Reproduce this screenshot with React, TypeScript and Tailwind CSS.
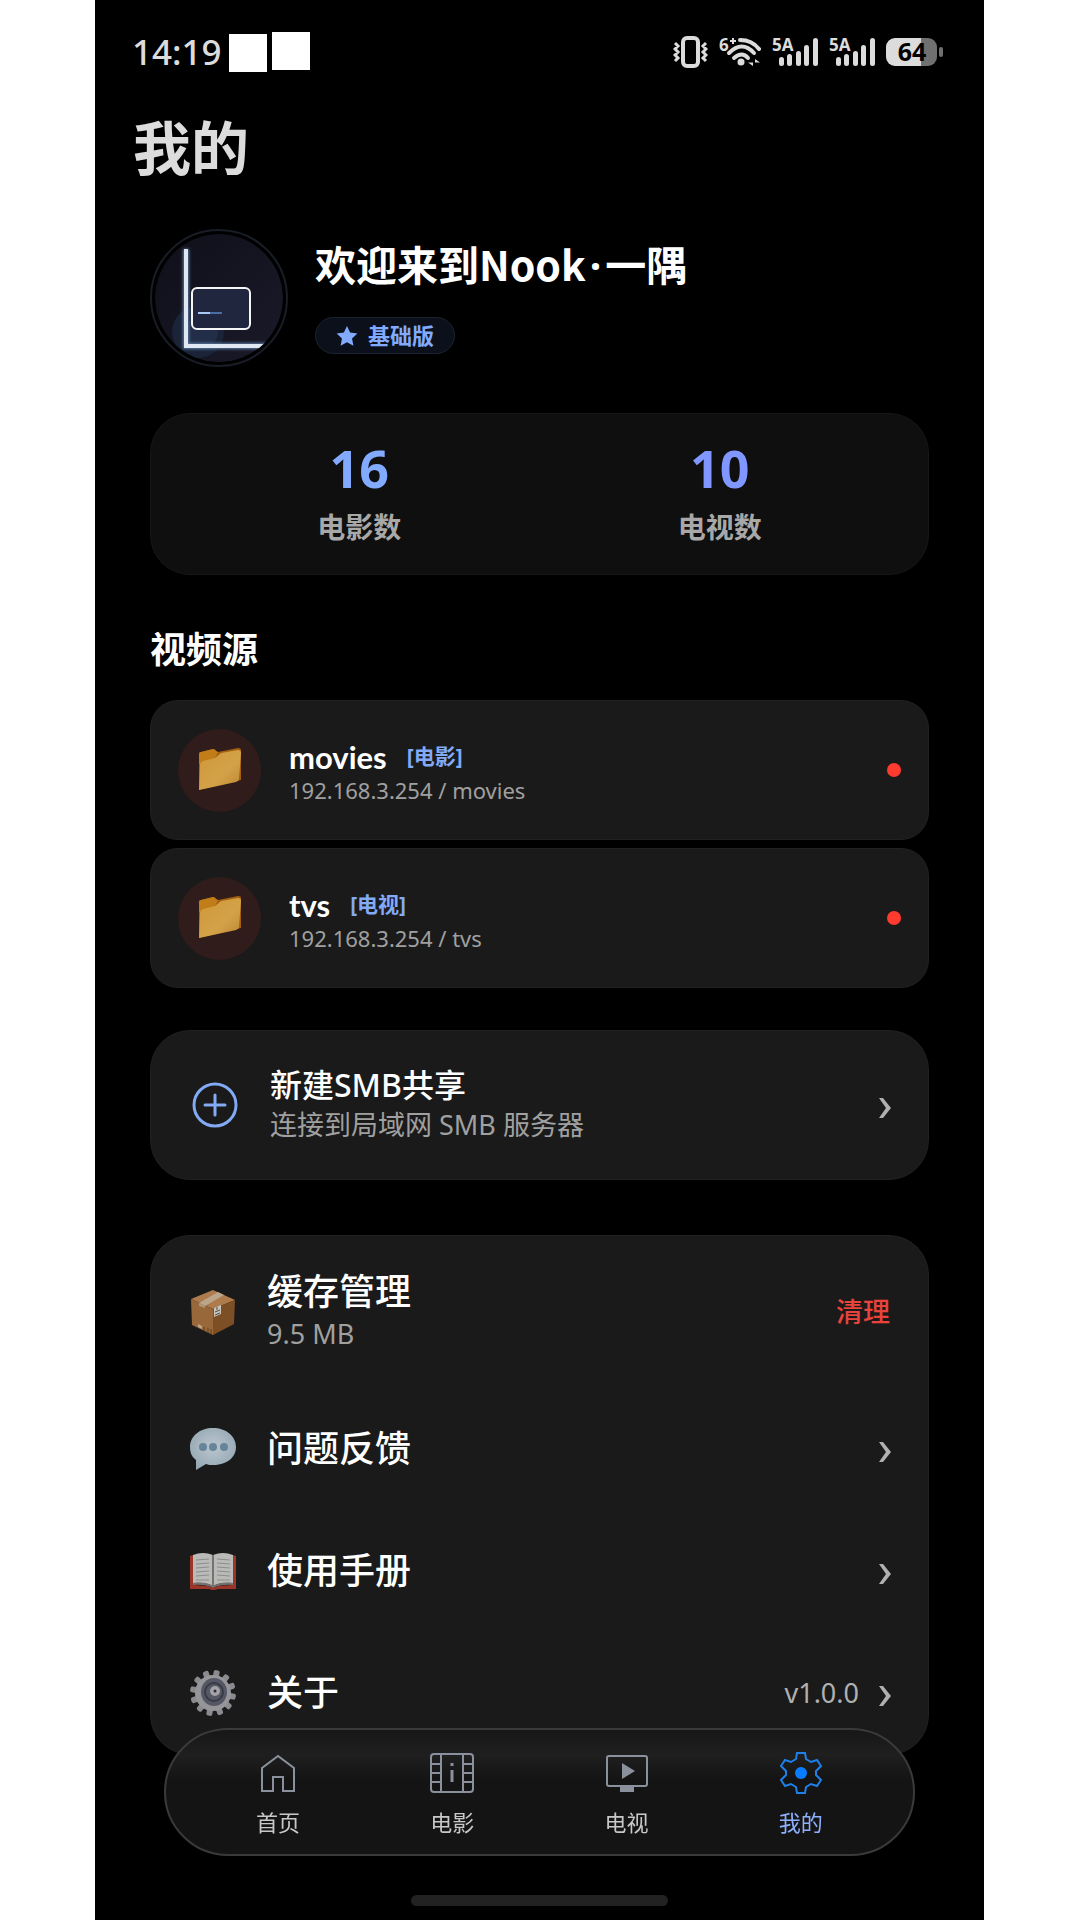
import { useState } from "react";
import type { ReactNode } from "react";

type Source = { name: string; tag: string; path: string };

const stats = [
  { label: "电影数", value: 16, color: "text-[#82aaff]" },
  { label: "电视数", value: 10, color: "text-[#8097ff]" },
];

const sources: Source[] = [
  { name: "movies", tag: "[电影]", path: "192.168.3.254 / movies" },
  { name: "tvs", tag: "[电视]", path: "192.168.3.254 / tvs" },
];

const SignalIcon = () => (
  <svg width="46" height="44" viewBox="0 -7 46 44" fill="#dcdcdc">
    <text x="0" y="14" fontSize="17" fontWeight="700">
      5A
    </text>
    <rect x="7" y="20" width="5" height="9" rx="2.5" />
    <rect x="15" y="17" width="5" height="12" rx="2.5" />
    <rect x="24" y="14" width="5" height="15" rx="2.5" />
    <rect x="32" y="8" width="5" height="21" rx="2.5" />
    <rect x="41" y="1" width="5" height="28" rx="2.5" />
  </svg>
);

const StatusBar = () => (
  <div className="flex h-[104px] items-center justify-between pr-[40px] pl-[37px]">
    <div className="flex items-center gap-[5px]">
      <span className="w-[92px] pb-[2px] text-[35px] leading-none font-medium text-[#dcdcdc]">
        14:19
      </span>
      <span className="mt-[2px] size-[38px] bg-white" />
      <span className="mb-[2px] size-[38px] bg-white" />
    </div>
    <div className="flex items-center gap-[11px]">
      <svg width="35" height="32" viewBox="0 0 35 32" fill="none" stroke="#dcdcdc">
        <rect x="10" y="2" width="15" height="28" rx="4" strokeWidth="4" />
        <path
          d="M2 7l3 3-3 3 3 3-3 3 3 3-3 3M33 7l-3 3 3 3-3 3 3 3-3 3 3 3"
          strokeWidth="3"
        />
      </svg>
      <svg width="42" height="44" viewBox="0 -7 42 44" fill="none" stroke="#dcdcdc">
        <text x="0" y="14" fontSize="17" fontWeight="700" fill="#dcdcdc" stroke="none">
          6
        </text>
        <path d="M14 1v6M11 4h6" strokeWidth="2" />
        <path d="M21 3q12 0 19 9" strokeWidth="4" strokeLinecap="round" />
        <path d="M10 16q13-13 25 0M15 21q8-7 14 0" strokeWidth="4" strokeLinecap="round" />
        <circle cx="22" cy="25" r="3.5" fill="#dcdcdc" stroke="none" />
        <path d="M34 22v7l-5-3.500h5M36 29v-7l5 3.500h-5" fill="#dcdcdc" stroke="none" />
      </svg>
      <SignalIcon />
      <SignalIcon />
      <svg width="58" height="44" viewBox="0 -8 58 44">
        <path d="M9 0h26v28H9a9 9 0 0 1-9-9V9a9 9 0 0 1 9-9z" fill="#dcdcdc" />
        <path d="M35 0h7a9 9 0 0 1 9 9v10a9 9 0 0 1-9 9h-7z" fill="#707070" />
        <rect x="53" y="9" width="4" height="10" rx="2" fill="#707070" />
        <text x="26" y="23" fontSize="25" fontWeight="700" textAnchor="middle" fill="#000">
          64
        </text>
      </svg>
    </div>
  </div>
);

const Avatar = () => (
  <svg width="138" height="138" viewBox="0 0 138 138" fill="none" className="shrink-0">
    <defs>
      <clipPath id="avatar-clip">
        <circle cx="69" cy="69" r="64" />
      </clipPath>
      <filter id="avatar-glow" x="-20%" y="-20%" width="140%" height="140%">
        <feGaussianBlur stdDeviation="1.5" />
      </filter>
      <linearGradient id="avatar-bg" x1="0" y1="0" x2="1" y2="1">
        <stop offset="0" stopColor="#0f101a" />
        <stop offset="1" stopColor="#1b1929" />
      </linearGradient>
    </defs>
    <circle cx="69" cy="69" r="68" stroke="#191d26" strokeWidth="2" />
    <g clipPath="url(#avatar-clip)">
      <circle cx="69" cy="69" r="64" fill="url(#avatar-bg)" />
      <circle cx="48" cy="103" r="26" fill="#1a2338" />
      <circle cx="52" cy="103" r="16" fill="#222d48" />
      <path d="M36 20v97h96" stroke="#5d7da3" strokeWidth="6" filter="url(#avatar-glow)" />
      <path d="M36 20v97h96" stroke="#e0e8f3" strokeWidth="4" />
      <rect x="42" y="59" width="58" height="41" rx="5" fill="#20263e" stroke="#f5f5f5" strokeWidth="2" />
      <path d="M48 84h12" stroke="#a9c8f5" strokeWidth="2" />
      <path d="M60 84h12" stroke="#4a6da3" strokeWidth="2" />
    </g>
  </svg>
);

const FolderIcon = () => (
  <svg width="44" height="44" viewBox="0 0 44 44">
    <defs>
      <linearGradient id="folder-front" x1="0" y1="0" x2="1" y2="1">
        <stop offset="0" stopColor="#d0973a" />
        <stop offset="0.6" stopColor="#d3a248" />
        <stop offset="1" stopColor="#bd8532" />
      </linearGradient>
    </defs>
    <path d="M1 6q0-2 2-2l12-3q2 0 3 2l2 1 20-4q3 0 3 2v30L1 42z" fill="#a0600f" />
    <path d="M1 6q0-2 2-2l12-3q2 0 3 2l2 1-4 8L1 16z" fill="#c07d18" />
    <path d="M2 17q0-3 3-4l12-3 6-5 17-3q3 0 3 3l-2 26q0 2-3 3L1 42z" fill="url(#folder-front)" />
  </svg>
);

const BoxIcon = () => (
  <svg width="46" height="46" viewBox="0 0 46 46">
    <path d="M1 10L23 1l22 10-22 9z" fill="#ad7b4c" />
    <path d="M1 10l22 10v26L2 36z" fill="#99683a" />
    <path d="M45 11L23 20v26l21-11z" fill="#7c4f25" />
    <path d="M9 14L28 3l6 3-19 11z" fill="#bba58b" />
    <path d="M9 14l6 3v2l-6-2z" fill="#ad957a" />
    <path d="M24 19l7-3v9l-7 3z" fill="#c9c5bd" />
    <path d="M25 23l5-2M25 26l5-2M27 18v3" stroke="#55483b" />
    <path d="M8 35l4 2v3l-4-2z" fill="#bba58b" />
    <path d="M14 38v4M18 39v5M21 40v5" stroke="#5e3b1c" strokeWidth="1" />
  </svg>
);

const ChatIcon = () => (
  <svg width="46" height="44" viewBox="0 0 46 44">
    <defs>
      <radialGradient id="bubble" cx="0.5" cy="0.45" r="0.6">
        <stop offset="0" stopColor="#bcc6cd" />
        <stop offset="1" stopColor="#93a7b4" />
      </radialGradient>
    </defs>
    <path
      d="M23 1C10 1 0 9 0 20c0 6 2 10 6 13v10l10-6c2 1 5 1 7 1 13 0 23-7 23-18S36 1 23 1z"
      fill="url(#bubble)"
    />
    <g fill="#66849a">
      <circle cx="13" cy="20" r="4" />
      <circle cx="23" cy="20" r="4" />
      <circle cx="34" cy="20" r="4" />
    </g>
  </svg>
);

const BookIcon = () => (
  <svg width="48" height="38" viewBox="0 0 48 38">
    <path d="M1 4l3-1 1 30 14 1q5 3 10 0l14-1 1-30 3 1v33H29q-5 2-9 0H1z" fill="#9a3527" />
    <path d="M4 3q10-4 20 0 10-4 20 0v28q-12-1-20 3-8-4-20-3z" fill="#babab8" />
    <path d="M4 31q13-2 20 3 7-5 20-3v2q-12-1-20 3-8-4-20-3z" fill="#76716d" />
    <path d="M24 3v31" stroke="#77736f" strokeWidth="2" />
    <path
      d="M7 8l13-1M7 12l13-1M7 16l13-1M7 20l13-1M7 24l13-1M7 28l13 0M28 7l13 1M28 11l13 1M28 15l13 1M28 19l13 1M28 23l13 1M28 28l13 0"
      stroke="#8c8c8a"
      strokeWidth="1"
    />
  </svg>
);

const teeth = [0, 30, 60, 90, 120, 150, 180, 210, 240, 270, 300, 330];

const CogIcon = () => (
  <svg width="46" height="46" viewBox="0 0 46 46">
    <g fill="#8b8b8f">
      {teeth.map((angle) => (
        <rect key={angle} x="20" y="0" width="6" height="9" rx="2" transform={`rotate(${angle + 10} 23 23)`} />
      ))}
    </g>
    <circle cx="23" cy="23" r="18" fill="#96969a" />
    <ellipse cx="24" cy="22" rx="13" ry="14" fill="#555864" />
    <circle cx="24" cy="22" r="9" fill="none" stroke="#383b46" strokeWidth="2" />
    <circle cx="25" cy="21" r="5" fill="#a3a3a7" />
    <circle cx="25" cy="21" r="1.5" fill="#2c2c32" />
  </svg>
);

const Chevron = () => (
  <svg width="13" height="20" viewBox="0 0 13 20" fill="#b0b0b0" className="mt-[6px]">
    <path d="M1 0h4l8 10-8 10H1l7-10z" />
  </svg>
);

const SourceCard = ({ source }: { source: Source }) => (
  <button className="flex h-[140px] w-full items-center rounded-[28px] border border-[#212121] bg-[#1a1a1a] px-[27px] text-left">
    <span className="flex size-[83px] shrink-0 items-center justify-center rounded-full bg-[#301c1b]">
      <FolderIcon />
    </span>
    <span className="ml-[28px] flex flex-1 flex-col pt-[6px]">
      <span className="flex items-center gap-[20px] leading-8">
        <span className="font-[Lato,'Noto_Sans_CJK_SC',sans-serif] text-[31px] font-bold text-white">
          {source.name}
        </span>
        <span className="pb-[2px] text-[21px] font-bold text-[#82aaf5]">{source.tag}</span>
      </span>
      <span className="text-[22px] leading-8 text-[#a0a0a0]">{source.path}</span>
    </span>
    <span className="size-[14px] rounded-full bg-[#ff3b30]" />
  </button>
);

const SettingRow = ({
  icon,
  title,
  detail,
}: {
  icon: ReactNode;
  title: string;
  detail?: string;
}) => (
  <button className="flex h-[122px] w-full items-center pr-[37px] pl-[38px] text-left">
    <span className="flex w-[48px] justify-center">{icon}</span>
    <span className="ml-[30px] flex-1 text-[36px] leading-none font-medium text-white">
      {title}
    </span>
    {detail && <span className="mr-[19px] text-[27px] text-[#b0b0b0]">{detail}</span>}
    <Chevron />
  </button>
);

const HomeIcon = () => (
  <svg width="44" height="44" viewBox="0 0 44 44" fill="none" stroke="#8b919c" strokeWidth="2">
    <path d="M6 40V17L22 5l16 12v23H27V26H17v14z" />
  </svg>
);

const FilmIcon = () => (
  <svg width="44" height="44" viewBox="0 0 44 44" fill="none" stroke="#8b919c" strokeWidth="2">
    <rect x="1" y="3" width="42" height="38" rx="3" />
    <path d="M11 3v38M33 3v38M1 13h10M1 22h10M1 31h10M33 13h10M33 22h10M33 31h10" />
    <path d="M22 12v3M22 19v12" strokeWidth="3" />
  </svg>
);

const TvIcon = () => (
  <svg width="44" height="44" viewBox="0 0 44 44" fill="none" stroke="#8b919c" strokeWidth="2">
    <rect x="2" y="5" width="40" height="30" rx="2" />
    <path d="M17 12v16l13-8z" fill="#8b919c" stroke="none" />
    <path d="M15 36h14v5H15z" fill="#8b919c" stroke="none" />
  </svg>
);

const GearIcon = () => (
  <svg width="44" height="44" viewBox="0 0 44 44" fill="none" stroke="#1e80e8" strokeWidth="2">
    <path d="M18 2h8l1 6 5 3 6-2 4 6-5 5v4l5 5-4 6-6-2-5 3-1 6h-8l-1-6-5-3-6 2-4-6 5-5v-4l-5-5 4-6 6 2 5-3z" />
    <circle cx="22" cy="22" r="6" fill="#0a7cff" stroke="none" />
  </svg>
);

const tabs = [
  { label: "首页", icon: <HomeIcon /> },
  { label: "电影", icon: <FilmIcon /> },
  { label: "电视", icon: <TvIcon /> },
  { label: "我的", icon: <GearIcon /> },
];

const TabBar = () => {
  const [active, setActive] = useState("我的");

  return (
    <div className="fixed inset-x-0 bottom-0 flex flex-col items-center gap-[39px] pr-[165px] pb-[14px] pl-[164px]">
      <nav className="grid h-[128px] w-full grid-cols-4 rounded-full border-2 border-[#3a3a3a] bg-linear-to-b from-[#171717] via-[#1f1f1f] via-20% to-[#141414] to-40% px-[25px]">
        {tabs.map((tab) => (
          <button
            key={tab.label}
            onClick={() => setActive(tab.label)}
            className="flex flex-col items-center justify-center gap-[11px] pt-1">
            {tab.icon}
            <span
              className={`text-[22px] leading-8 ${
                active === tab.label ? "text-[#8fb0ff]" : "text-[#c8c8c8]"
              }`}>
              {tab.label}
            </span>
          </button>
        ))}
      </nav>
      <div className="h-[11px] w-[257px] rounded-full bg-[#222222]" />
    </div>
  );
};

const App = () => {
  return (
    <div className="min-h-screen bg-white pr-[96px] pl-[95px] font-['Noto_Sans','Noto_Sans_CJK_SC',sans-serif]">
      <div className="min-h-screen bg-black pb-[166px]">
        <StatusBar />
        <h1 className="flex h-[88px] items-center px-[38px] text-[58px] leading-none font-bold text-[#dcdcdc]">
          我的
        </h1>

        <main className="px-[55px] pt-[37px]">
          <section className="flex gap-[27px]">
            <Avatar />
            <div className="flex flex-col items-start pt-[8px]">
              <h2 className="font-['Noto_Sans_CJK_SC',sans-serif] text-[41px] leading-[52px] font-bold text-white">
                欢迎来到Nook<span className="px-1 font-['Noto_Sans',sans-serif]">·</span>一隅
              </h2>
              <span className="mt-[26px] flex h-[37px] items-center gap-[10px] rounded-full border border-[#1c2330] bg-[#0b101a] px-[20px] text-[22px] font-bold text-[#82aaff]">
                <svg width="22" height="22" viewBox="0 0 24 24" fill="currentColor">
                  <path d="M12 1l3.4 7.3 7.9 1-5.8 5.5 1.5 7.9L12 18.8l-7 3.9 1.5-7.9L.7 9.3l7.9-1z" />
                </svg>
                基础版
              </span>
            </div>
          </section>

          <section className="mt-[46px] grid h-[162px] grid-cols-2 items-center rounded-[40px] border border-[#171717] bg-[#0f0f0f] px-7">
            {stats.map((stat) => (
              <div key={stat.label} className="flex flex-col items-center pt-[2px]">
                <span className={`text-[52px] leading-[64px] font-bold ${stat.color}`}>
                  {stat.value}
                </span>
                <span className="text-[28px] leading-[54px] font-bold text-[#a8a8a8]">
                  {stat.label}
                </span>
              </div>
            ))}
          </section>

          <h2 className="mt-[47px] text-[36px] leading-[56px] font-bold text-white">视频源</h2>
          <div className="mt-[22px] flex flex-col gap-[8px]">
            {sources.map((source) => (
              <SourceCard key={source.name} source={source} />
            ))}
          </div>

          <button className="mt-[42px] flex h-[150px] w-full items-center rounded-[40px] border border-[#212121] bg-[#1a1a1a] pr-[37px] pl-[41px] text-left">
            <svg width="46" height="46" viewBox="0 0 46 46" fill="none" stroke="#82aaf5" strokeLinecap="round">
              <circle cx="23" cy="23" r="21" strokeWidth="3" />
              <path d="M23 13v20M13 23h20" strokeWidth="3" />
            </svg>
            <span className="ml-[32px] flex flex-1 flex-col">
              <span className="text-[32px] leading-10 font-medium text-white">新建SMB共享</span>
              <span className="text-[27px] leading-10 text-[#a0a0a0]">
                连接到局域网 SMB 服务器
              </span>
            </span>
            <Chevron />
          </button>

          <section className="mt-[55px] rounded-[40px] border border-[#212121] bg-[#1a1a1a]">
            <div className="flex h-[152px] items-center pr-[38px] pl-[38px]">
              <span className="flex w-[48px] justify-center">
                <BoxIcon />
              </span>
              <div className="ml-[30px] flex flex-1 flex-col">
                <span className="text-[36px] leading-[44px] font-medium text-white">缓存管理</span>
                <span className="text-[27px] leading-10 text-[#a0a0a0]">9.5 MB</span>
              </div>
              <button className="text-[27px] font-medium text-[#e8443b]">清理</button>
            </div>
            <SettingRow icon={<ChatIcon />} title="问题反馈" />
            <SettingRow icon={<BookIcon />} title="使用手册" />
            <SettingRow icon={<CogIcon />} title="关于" detail="v1.0.0" />
          </section>
        </main>
        <TabBar />
      </div>
    </div>
  );
};

export default App;
